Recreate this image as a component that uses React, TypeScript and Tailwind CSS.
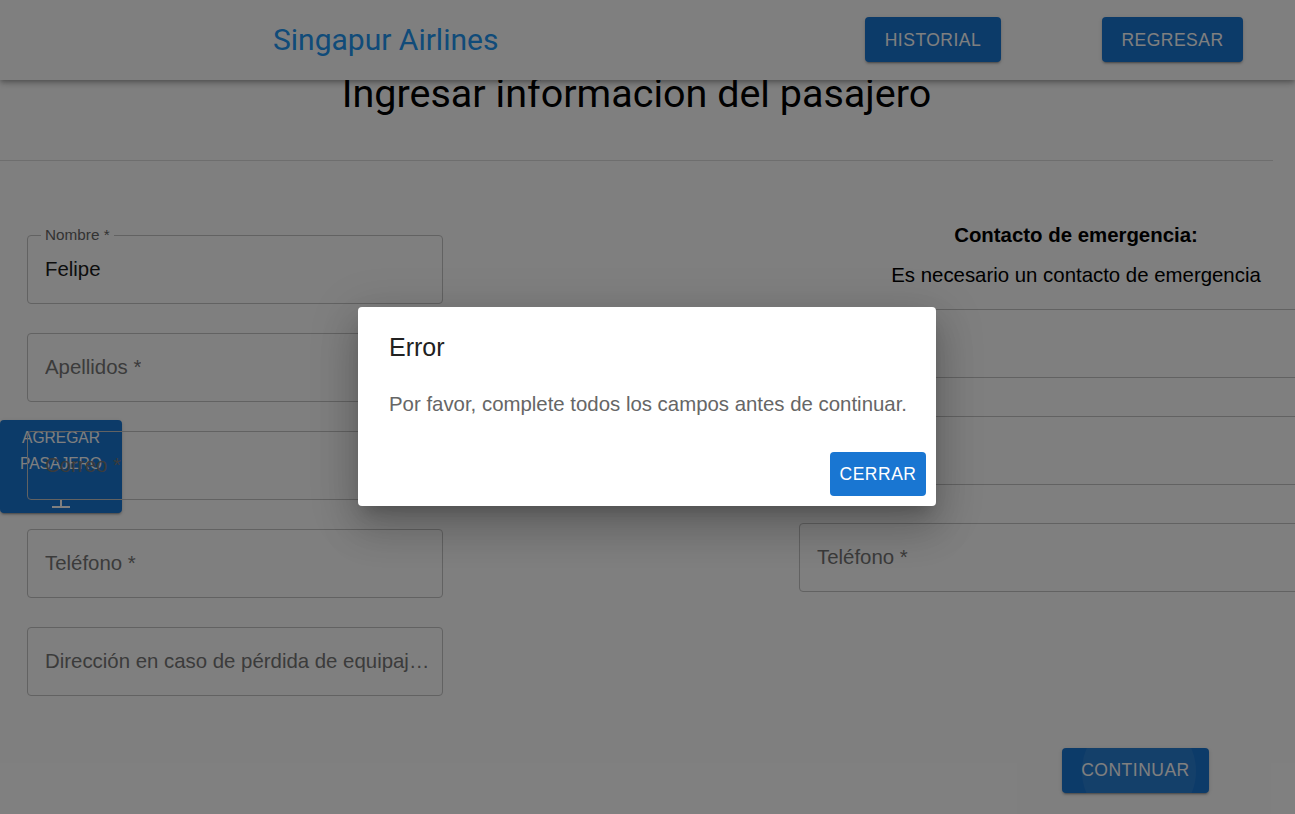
import React from "react";

function Field({ label, value, tight }: { label: string; value?: string; tight?: boolean }) {
  return (
    <div className="relative z-10 h-[69px] rounded-[4px] border border-[#c4c4c4]">
      {value ? (
        <>
          <span className="absolute -top-[10px] left-[13px] bg-white px-[4px] text-[15.3px] leading-[18px] text-[#666]">
            {label}
          </span>
          <div className="flex h-full items-center px-[17px] text-[20.4px] text-[#1a1a1a]">{value}</div>
        </>
      ) : (
        <div
          className={`flex h-full items-center pl-[17px] text-[20.4px] text-[#777] ${tight ? "pr-[12px]" : "pr-[17px]"}`}
        >
          <span className="truncate">{label}</span>
        </div>
      )}
    </div>
  );
}

const btnShadow =
  "shadow-[0_3px_1px_-2px_rgba(0,0,0,0.2),0_2px_2px_0_rgba(0,0,0,0.14),0_1px_5px_0_rgba(0,0,0,0.12)]";

export default function App() {
  return (
    <div className="relative h-[814px] w-[1295px] overflow-hidden bg-white font-['Liberation_Sans',Arial,sans-serif] text-[20.4px] text-[#1a1a1a]">
      {/* App bar */}
      <header className="absolute left-0 right-0 top-0 z-20 flex h-[80px] items-start bg-white shadow-[0_2px_4px_-1px_rgba(0,0,0,0.2),0_4px_5px_0_rgba(0,0,0,0.14),0_1px_10px_0_rgba(0,0,0,0.12)]">
        <div className="mt-[22px] w-[865px] pl-[273px] font-['Roboto',sans-serif] text-[30px] leading-[36px] text-[#2196f3]">
          Singapur Airlines
        </div>
        <button
          className={`mt-[17px] h-[45px] w-[136px] rounded-[4px] bg-[#1976d2] pt-[2px] text-[17.5px] tracking-[0.5px] text-white ${btnShadow}`}
        >
          HISTORIAL
        </button>
        <button
          className={`ml-[101px] mt-[17px] h-[45px] w-[141px] rounded-[4px] bg-[#1976d2] pt-[2px] text-[17.5px] tracking-[0.5px] text-white ${btnShadow}`}
        >
          REGRESAR
        </button>
      </header>

      {/* Floating add passenger button (behind fields) */}
      <button
        className={`absolute left-0 top-[420px] flex h-[93px] w-[122px] flex-col items-center overflow-hidden rounded-[4px] bg-[#1976d2] pt-[5px] text-[15.6px] leading-[26px] text-white ${btnShadow}`}
      >
        <span>AGREGAR</span>
        <span>PASAJERO</span>
        <svg className="mt-[22px]" width="20" height="9" viewBox="0 0 20 9" fill="none">
          <path d="M10 0v8M1 8h18" stroke="white" strokeWidth="2" />
        </svg>
      </button>

      <main className="w-[1273px] pt-[71px]">
        <h1 className="text-center font-['Roboto',sans-serif] text-[39.5px] font-normal leading-[46px] text-black">
          Ingresar informacion del pasajero
        </h1>
        <div className="mt-[43px] border-t border-[#dcdcdc]" />

        <div className="flex">
          <div className="ml-[27px] flex w-[416px] shrink-0 flex-col gap-[29px] pt-[74px]">
            <Field label="Nombre *" value="Felipe" />
            <Field label="Apellidos *" />
            <Field label="Correo *" />
            <Field label="Teléfono *" />
            <Field label="Dirección en caso de pérdida de equipaje *" tight />
          </div>

          <div className="ml-[356px] w-[554px] shrink-0 pt-[59px]">
            <h3 className="text-center text-[20.4px] font-bold leading-[30px] text-black">Contacto de emergencia:</h3>
            <p className="mt-[10px] text-center text-[20.4px] leading-[30px] text-black">
              Es necesario un contacto de emergencia
            </p>
            <div className="mt-[19px] flex flex-col gap-[38px]">
              <Field label="Nombre *" />
              <Field label="Apellidos *" />
              <Field label="Teléfono *" />
            </div>
          </div>
        </div>

        <button
          className={`relative ml-[1062px] mt-[52px] h-[45px] w-[147px] overflow-hidden rounded-[4px] bg-[#1976d2] text-[17.5px] tracking-[0.5px] text-white ${btnShadow}`}
        >
          <span className="absolute left-[20px] top-[-34px] h-[114px] w-[114px] rounded-full bg-white/[0.07]" />
          <span className="relative">CONTINUAR</span>
        </button>
      </main>

      {/* Modal overlay */}
      <div className="absolute inset-0 z-30 bg-black/50 pl-[358px] pt-[307px]">
        <div className="flex h-[199px] w-[578px] flex-col rounded-[4px] bg-white shadow-[0_11px_15px_-7px_rgba(0,0,0,0.2),0_24px_38px_3px_rgba(0,0,0,0.14),0_9px_46px_8px_rgba(0,0,0,0.12)]">
          <div className="px-[31px] pt-[20px] text-[25px] leading-[40px] text-[#212121]">Error</div>
          <div className="whitespace-nowrap pl-[31px] pt-[22px] text-[20.4px] leading-[30px] text-[#666]">
            Por favor, complete todos los campos antes de continuar.
          </div>
          <div className="mt-auto flex justify-end p-[10px]">
            <button className="h-[44px] w-[96px] rounded-[4px] bg-[#1976d2] text-[17.5px] tracking-[0.5px] text-white">
              CERRAR
            </button>
          </div>
        </div>
      </div>
    </div>
  );
}
